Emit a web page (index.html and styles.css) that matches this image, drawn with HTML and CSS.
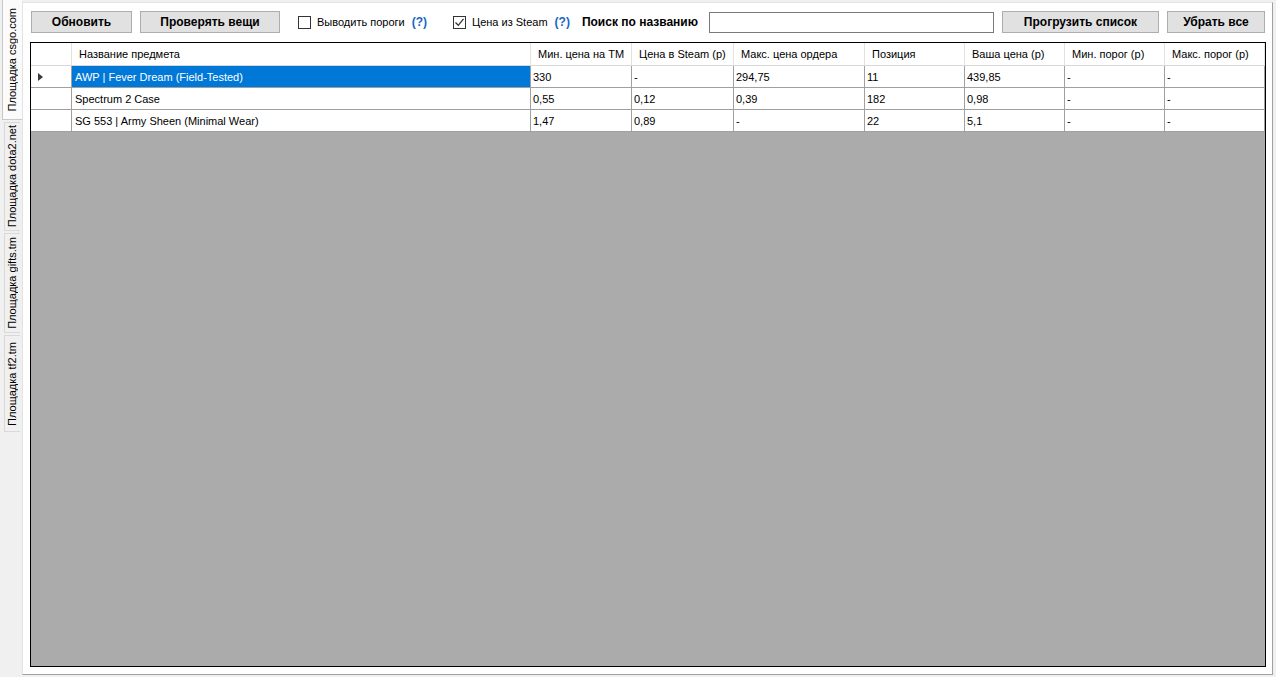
FILE: index.html
```html
<!DOCTYPE html>
<html lang="ru">
<head>
<meta charset="utf-8">
<title>Площадки</title>
<link rel="stylesheet" href="styles.css">
</head>
<body>
<div class="app">
  <div class="tabs">
    <div class="tab tab-active tab-h1"><span class="tab-label">Площадка csgo.com</span></div>
    <div class="tab tab-h2"><span class="tab-label">Площадка dota2.net</span></div>
    <div class="tab tab-h3"><span class="tab-label">Площадка gifts.tm</span></div>
    <div class="tab tab-h4"><span class="tab-label">Площадка tf2.tm</span></div>
  </div>
  <div class="page">
    <div class="toolbar">
      <button class="btn btn-refresh">Обновить</button>
      <button class="btn btn-check">Проверять вещи</button>
      <label class="chk chk-1">
        <span class="box"></span>
        <span class="chk-text">Выводить пороги</span>
      </label>
      <span class="help">(?)</span>
      <label class="chk chk-2">
        <span class="box box-checked">
          <svg width="11" height="11" viewBox="0 0 11 11"><polyline points="1.5,5.5 4.3,8.3 9.5,1.8" fill="none" stroke="#333" stroke-width="1.3"/></svg>
        </span>
        <span class="chk-text">Цена из Steam</span>
      </label>
      <span class="help">(?)</span>
      <span class="search-label">Поиск по названию</span>
      <input class="search" type="text">
      <button class="btn btn-load">Прогрузить список</button>
      <button class="btn btn-clear">Убрать все</button>
    </div>
    <div class="grid">
      <table class="table">
        <colgroup>
          <col class="c-rh"><col class="c-name"><col class="c-w101"><col class="c-w102"><col class="c-w131"><col class="c-w100"><col class="c-w100"><col class="c-w100"><col class="c-w100">
        </colgroup>
        <thead>
          <tr>
            <th class="rh"></th>
            <th>Название предмета</th>
            <th>Мин. цена на ТМ</th>
            <th>Цена в Steam (р)</th>
            <th>Макс. цена ордера</th>
            <th>Позиция</th>
            <th>Ваша цена (р)</th>
            <th>Мин. порог (р)</th>
            <th>Макс. порог (р)</th>
          </tr>
        </thead>
        <tbody>
          <tr>
            <td class="rh"><span class="arrow"></span></td>
            <td class="sel">AWP | Fever Dream (Field-Tested)</td>
            <td>330</td><td>-</td><td>294,75</td><td>11</td><td>439,85</td><td>-</td><td>-</td>
          </tr>
          <tr>
            <td class="rh"></td>
            <td>Spectrum 2 Case</td>
            <td>0,55</td><td>0,12</td><td>0,39</td><td>182</td><td>0,98</td><td>-</td><td>-</td>
          </tr>
          <tr>
            <td class="rh"></td>
            <td>SG 553 | Army Sheen (Minimal Wear)</td>
            <td>1,47</td><td>0,89</td><td>-</td><td>22</td><td>5,1</td><td>-</td><td>-</td>
          </tr>
        </tbody>
      </table>
    </div>
  </div>
</div>
</body>
</html>
```
FILE: styles.css
```css
* { box-sizing: border-box; }
html, body { margin: 0; padding: 0; }
body {
  background: #f0f0f0;
  font-family: "Liberation Sans", Arial, sans-serif;
  font-size: 11px;
  color: #000;
  width: 1276px;
  height: 677px;
  overflow: hidden;
}
.app { display: flex; height: 677px; }

/* vertical tabs */
.tabs { width: 22px; flex: none; display: flex; flex-direction: column; }
.tab {
  flex: none;
  display: flex; align-items: center; justify-content: center;
  overflow: hidden;
  background: #f0f0f0;
  border: 1px solid #d9d9d9;
  border-right: none;
  margin-left: 4px;
  width: 16px;
  margin-top: 2px;
}
.tab-active {
  margin-left: 2px; width: 20px; margin-top: 0;
  background: #fbfbfb;
  border-color: #c8c8c8;
  border-top: none;
  position: relative; z-index: 1;
}
.tab-h1 { height: 120px; }
.tab-h2 { height: 109px; }
.tab-h3 { height: 100px; }
.tab-h4 { height: 97px; }
.tab-label {
  writing-mode: vertical-rl;
  transform: rotate(180deg);
  font-size: 11px;
  white-space: nowrap;
  line-height: 13px;
}

/* page */
.page {
  flex: 1;
  margin: 2px 3px 2px 0;
  background: #fff;
  border: 1px solid #e3e3e3;
  border-right-color: #a0a0a0;
  border-bottom-color: #a0a0a0;
  display: flex; flex-direction: column;
}
.toolbar {
  display: flex; align-items: center;
  height: 22px;
  margin-top: 8px;
  padding-left: 8px;
  flex: none;
}
.btn {
  height: 22px;
  background: #e1e1e1;
  border: 1px solid #adadad;
  font-family: "Liberation Sans", Arial, sans-serif;
  font-weight: bold;
  font-size: 12px;
  color: #000;
  padding: 0;
  margin: 0;
}
.btn-refresh { width: 101px; }
.btn-check { width: 140px; margin-left: 8px; }
.btn-load { width: 157px; margin-left: 8px; }
.btn-clear { width: 98px; margin-left: 8px; }
.chk { display: flex; align-items: center; }
.chk-1 { margin-left: 18px; }
.chk-2 { margin-left: 26px; }
.box {
  width: 13px; height: 13px;
  border: 1px solid #333;
  background: #fff;
  display: flex; align-items: center; justify-content: center;
}
.box svg { display: block; }
.chk-text { margin-left: 6px; font-size: 11px; }
.help {
  color: #1466c8; font-weight: bold; font-size: 12px;
  margin-left: 7px;
}
.search-label { font-weight: bold; font-size: 12px; margin-left: 12px; }
.search {
  width: 285px; height: 21px;
  margin: 0 0 0 11px;
  border: 1px solid #7a7a7a;
  background: #fff;
  padding: 0;
}

/* grid */
.grid {
  flex: 1;
  margin: 9px 6px 7px 7px;
  border: 1px solid #000;
  background: #ababab;
  overflow: hidden;
}
.table {
  border-collapse: separate;
  border-spacing: 0;
  table-layout: fixed;
  width: 1234px;
}
.c-rh { width: 41px; }
.c-name { width: 459px; }
.c-w101 { width: 101px; }
.c-w102 { width: 102px; }
.c-w131 { width: 131px; }
.c-w100 { width: 100px; }
th {
  height: 23px;
  background: #fff;
  font-weight: normal;
  text-align: left;
  padding: 0 0 0 7px;
  border-right: 1px solid #e2e2e2;
  border-bottom: 1px solid #d8d8d8;
  white-space: nowrap;
  overflow: hidden;
  font-size: 11px;
}
td {
  height: 22px;
  background: #fff;
  padding: 0 0 0 3px;
  border-right: 1px solid #a0a0a0;
  border-bottom: 1px solid #a0a0a0;
  white-space: nowrap;
  overflow: hidden;
}
td.rh { padding: 0 0 0 7px; }
td.sel { background: #0078d7; color: #fff; }
td:nth-child(n+3) { padding-left: 2px; }
.arrow {
  display: block;
  width: 0; height: 0;
  border-top: 4px solid transparent;
  border-bottom: 4px solid transparent;
  border-left: 5px solid #3a3a3a;
}
```
